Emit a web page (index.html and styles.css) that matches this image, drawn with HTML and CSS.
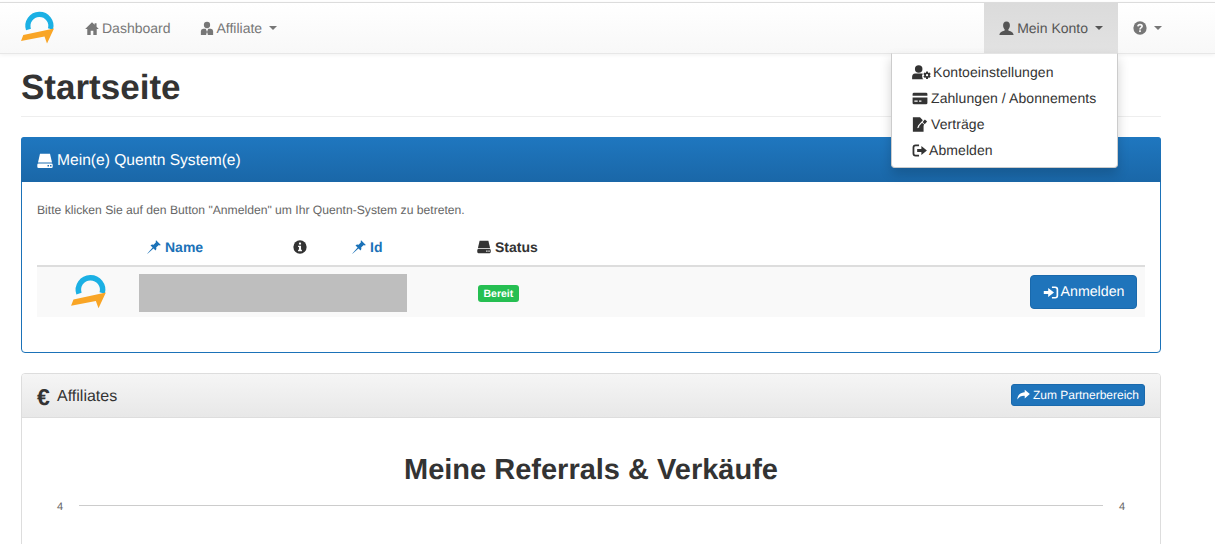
FILE: index.html
```html
<!DOCTYPE html>
<html lang="de">
<head>
<meta charset="utf-8">
<title>Startseite</title>
<link rel="stylesheet" href="styles.css">
</head>
<body>
<svg class="defs" width="0" height="0" aria-hidden="true">
  <symbol id="logo" viewBox="0 0 36 36">
    <path d="M8.5 19.5 A11.5 11.5 0 1 1 30.5 19" fill="none" stroke="#1bb0e4" stroke-width="5.2"/>
    <path d="M1 31 L3.3 25 L34 18.5 L27 33.5 L24.5 26.5 Z" fill="#f9a526"/>
  </symbol>
  <symbol id="i-home" viewBox="0 0 16 16"><path d="M8 .8 L.2 8.6 H2.6 V15.4 H6.5 V10.5 H9.5 V15.4 H13.4 V8.6 H15.8 L13.2 6 V2 H11 V3.8z"/></symbol>
  <symbol id="i-aff" viewBox="0 0 16 16"><circle cx="8" cy="4" r="3.6"/><path d="M1 15.5 V11 Q1 8.6 3.6 8.4 H6.6 L8 12 L9.4 8.4 H12.4 Q15 8.6 15 11 V15.5 H9 L8.4 12.5 H7.6 L7 15.5z"/></symbol>
  <symbol id="i-user" viewBox="0 0 16 16"><path d="M8 .6 C10.6 .6 11.8 2.5 11.6 5 C11.5 6.8 10.8 8 10 8.7 V10 C11.2 10.7 15.4 11 15.6 15 H.4 C.6 11 4.8 10.7 6 10 V8.7 C5.2 8 4.5 6.8 4.4 5 C4.2 2.5 5.4 .6 8 .6z"/></symbol>
  <symbol id="i-q" viewBox="0 0 16 16"><circle cx="8" cy="8" r="7.6"/><path d="M5.6 6.2 C5.8 3.4 10.4 3.4 10.4 6 C10.4 7.6 8 7.6 8 9.6" fill="none" stroke="#fafafa" stroke-width="1.9"/><rect x="7" y="10.6" width="2" height="2" fill="#fafafa"/></symbol>
  <symbol id="i-info" viewBox="0 0 16 16"><circle cx="8" cy="8" r="7.6"/><rect x="6.8" y="3" width="2.4" height="2.2" fill="#fff"/><path d="M5.8 6.5 H9.2 V11.2 H10.2 V12.8 H5.8 V11.2 H6.8 V8.1 H5.8z" fill="#fff"/></symbol>
  <symbol id="i-pin" viewBox="0 0 16 16"><path d="M10.4 .2 L15.8 5.6 L14.6 6.2 L13.6 5.6 L10.6 8.4 Q11.2 10.6 9.8 12 L7.4 9.6 L.6 15.6 L.4 15.4 L6.4 8.6 L4 6.2 Q5.4 4.8 7.6 5.4 L10.4 2.4 L9.8 1.4z"/></symbol>
  <symbol id="i-hdd" viewBox="0 0 16 16"><path d="M3 .8 H13 L15 9.4 H1z"/><path fill-rule="evenodd" d="M1.6 10.4 H14.4 Q15.7 10.4 15.7 11.7 V13.7 Q15.7 15 14.4 15 H1.6 Q.3 15 .3 13.7 V11.7 Q.3 10.4 1.6 10.4z M10.5 12 V13.4 H12 V12z M13 12 V13.4 H14.5 V12z"/></symbol>
  <symbol id="i-login" viewBox="0 0 16 16"><path d="M9 1.5 H12.5 Q15.7 1.5 15.7 4.7 V11.3 Q15.7 14.5 12.5 14.5 H9 V12.7 H12.3 Q13.9 12.7 13.9 11.1 V4.9 Q13.9 3.3 12.3 3.3 H9z"/><path d="M.3 6.3 H5 V3.2 L11.2 8 L5 12.8 V9.7 H.3z"/></symbol>
  <symbol id="i-logout" viewBox="0 0 16 16"><path d="M7.5 1.5 H3.8 Q.6 1.5 .6 4.7 V11.3 Q.6 14.5 3.8 14.5 H7.5 V12.6 H4 Q2.5 12.6 2.5 11.1 V4.9 Q2.5 3.4 4 3.4 H7.5z"/><path d="M5.5 6.3 H10 V3.2 L15.9 8 L10 12.8 V9.7 H5.5z"/></symbol>
  <symbol id="i-share" viewBox="0 0 16 16"><path d="M9.5 2 L15.8 7.5 L9.5 13 V9.7 C5.5 9.5 3 10.7 .4 14 C.8 9 4 5.6 9.5 5.3z"/></symbol>
  <symbol id="i-card" viewBox="0 0 16 16"><path fill-rule="evenodd" d="M1.6 1.8 H14.4 Q15.9 1.8 15.9 3.3 V5 H.1 V3.3 Q.1 1.8 1.6 1.8z M.1 6.8 H15.9 V12.7 Q15.9 14.2 14.4 14.2 H1.6 Q.1 14.2 .1 12.7z M2 10 V11.4 H5.5 V10z M7 10 V11.4 H9.5 V10z"/></symbol>
  <symbol id="i-contract" viewBox="0 0 16 16"><path d="M.4 .3 H8 L11 3.4 L6 9 L5 12 L8 11 L11.8 7 V15.7 H.4z"/><path d="M10.8 5.4 L13.2 2.6 L15.6 4.8 L13 7.6z M7.4 9.2 L10.2 6.2 L12.4 8.2 L9 11.2 L6.6 11.8z"/></symbol>
  <symbol id="i-userset" viewBox="0 0 20 16"><circle cx="7" cy="4.2" r="4"/><path d="M0 15.2 V12.5 Q0 9.2 3.2 9 H10.4 Q11 9 11.5 9.2 L10.6 11 L11 14 L12 15.2z"/><path fill-rule="evenodd" d="M15 7 L16.8 7 L17.2 8.6 L18.7 8.1 L19.8 9.6 L18.7 10.9 L19.8 12.2 L18.7 13.7 L17.2 13.2 L16.8 14.8 H15 L14.6 13.2 L13.1 13.7 L12 12.2 L13.1 10.9 L12 9.6 L13.1 8.1 L14.6 8.6z M15.9 9.7 A1.2 1.2 0 1 0 15.9 12.1 A1.2 1.2 0 1 0 15.9 9.7z"/></symbol>
</svg>

<nav class="navbar">
  <a class="brand" href="#"><svg class="logo-nav"><use href="#logo"/></svg></a>
  <ul class="nav">
    <li><a href="#"><svg class="ic"><use href="#i-home"/></svg>Dashboard</a></li>
    <li class="aff"><a href="#"><svg class="ic"><use href="#i-aff"/></svg>Affiliate<span class="caret"></span></a></li>
  </ul>
  <ul class="nav nav-right">
    <li class="open">
      <a href="#"><svg class="ic ic-wide"><use href="#i-user"/></svg>Mein Konto<span class="caret"></span></a>
      <ul class="menu">
        <li><a href="#"><svg class="ic-set"><use href="#i-userset"/></svg>Kontoeinstellungen</a></li>
        <li><a href="#"><svg class="ic-menu"><use href="#i-card"/></svg>Zahlungen / Abonnements</a></li>
        <li><a href="#"><svg class="ic-menu"><use href="#i-contract"/></svg>Verträge</a></li>
        <li><a href="#"><svg class="ic-logout"><use href="#i-logout"/></svg>Abmelden</a></li>
      </ul>
    </li>
    <li class="help"><a href="#"><svg class="ic-q"><use href="#i-q"/></svg><span class="caret"></span></a></li>
  </ul>
</nav>

<main class="container">
  <h1 class="page-title">Startseite</h1>

  <section class="panel panel-primary">
    <header class="panel-head head-blue">
      <h2 class="panel-name"><svg class="ic-panel"><use href="#i-hdd"/></svg>Mein(e) Quentn System(e)</h2>
    </header>
    <div class="panel-body">
      <p class="hint">Bitte klicken Sie auf den Button "Anmelden" um Ihr Quentn-System zu betreten.</p>
      <div class="tbl-head">
        <span></span>
        <span class="th th-link"><svg class="ic-th"><use href="#i-pin"/></svg>Name</span>
        <span class="th"><svg class="ic-info"><use href="#i-info"/></svg></span>
        <span class="th th-link"><svg class="ic-th"><use href="#i-pin"/></svg>Id</span>
        <span class="th"><svg class="ic-th"><use href="#i-hdd"/></svg>Status</span>
      </div>
      <div class="tbl-row">
        <span class="cell-logo"><svg class="logo-row"><use href="#logo"/></svg></span>
        <span class="redacted"></span>
        <span class="cell-status"><span class="badge">Bereit</span></span>
        <span class="cell-action"><a class="btn" href="#"><svg class="ic-btn"><use href="#i-login"/></svg>Anmelden</a></span>
      </div>
    </div>
  </section>

  <section class="panel panel-default">
    <header class="panel-head head-grey">
      <h2 class="panel-name name-dark"><span class="euro">€</span>Affiliates</h2>
      <a class="btn btn-sm" href="#"><svg class="ic-share"><use href="#i-share"/></svg>Zum Partnerbereich</a>
    </header>
    <div class="chart">
      <h3 class="chart-title">Meine Referrals &amp; Verkäufe</h3>
      <div class="chart-axis"><span>4</span><i></i><span>4</span></div>
    </div>
  </section>
</main>
</body>
</html>
```
FILE: styles.css
```css
* { box-sizing: border-box; }
html, body { height: 544px; overflow: hidden; }
body {
  margin: 0;
  background: #fff;
  color: #333;
  font-family: "Liberation Sans", Arial, sans-serif;
  font-size: 14px;
  line-height: 20px;
  text-rendering: geometricPrecision;
}
a { text-decoration: none; color: inherit; }
ul { list-style: none; margin: 0; padding: 0; }
.defs { position: absolute; }
svg { fill: currentColor; flex: none; }

/* navbar */
.navbar {
  display: flex;
  align-items: stretch;
  height: 52px;
  margin-top: 2px;
  border-top: 1px solid #dcdcdc;
  border-bottom: 1px solid #e7e7e7;
  background: linear-gradient(#fff, #f8f8f8);
  box-shadow: 0 1px 4px rgba(0, 0, 0, .06);
}
.brand { display: flex; align-items: center; width: 70px; padding-left: 20px; }
.logo-nav { width: 36px; height: 36px; }
.nav { display: flex; color: #777; }
.nav > li { position: relative; display: flex; }
.nav > li > a { display: flex; align-items: center; padding: 0 15px; }
.nav > .aff { margin-left: -1px; }
.nav-right { margin-left: auto; margin-right: 38px; }
.ic { width: 14px; height: 15px; margin-right: 3px; }
.ic-wide { width: 15px; }
.caret {
  width: 0; height: 0;
  margin-left: 7px;
  border-top: 4px solid currentColor;
  border-left: 4px solid transparent;
  border-right: 4px solid transparent;
}
.open > a { background: linear-gradient(#dbdbdb, #e2e2e2); color: #555; }
.help > a { padding: 0 14px; }
.ic-q { width: 14px; height: 14px; }

/* dropdown */
.menu {
  position: absolute;
  z-index: 5;
  top: 50px;
  right: 0;
  width: 227px;
  padding: 5px 0 4px;
  background: #fff;
  border: 1px solid #ccc;
  border-top-color: #e4e4e4;
  border-radius: 0 0 4px 4px;
  box-shadow: 0 6px 12px rgba(0, 0, 0, .175);
}
.menu a { display: flex; align-items: center; height: 26px; padding-left: 20px; color: #333; white-space: nowrap; letter-spacing: .08px; }
.ic-set { width: 19px; height: 15px; margin-right: 2px; }
.ic-menu { width: 16px; height: 15px; margin-right: 3px; }
.ic-logout { width: 15px; height: 15px; margin-right: 2px; }

/* page */
.container { width: 1140px; margin-left: 21px; }
.page-title {
  margin: 0 0 20px;
  height: 63px;
  padding-top: 14px;
  border-bottom: 1px solid #eee;
  font-size: 35px;
  line-height: 40px;
  font-weight: 700;
}

/* panels */
.panel { margin-bottom: 20px; background: #fff; border: 1px solid #ddd; border-radius: 4px; }
.panel-primary { border-color: #1b72b8; height: 216px; }
.panel-default { height: 300px; }
.panel-head {
  display: flex;
  align-items: center;
  justify-content: space-between;
  height: 44px;
  padding: 0 15px;
  border-radius: 3px 3px 0 0;
}
.head-blue { margin: -1px -1px 0; padding: 0 16px; height: 45px; color: #fff; background: linear-gradient(#1f77bf, #1a67a8); }
.head-grey { height: 44px; border-bottom: 1px solid #ddd; background: linear-gradient(#f5f5f5, #e8e8e8); }
.head-grey .btn-sm { margin-bottom: 2px; }
.panel-name { display: flex; align-items: center; margin: 0; padding-top: 2px; font-size: 15.6px; font-weight: 400; line-height: 20px; }
.name-dark { font-size: 16px; }
.ic-panel { width: 16px; height: 16px; margin-right: 4px; }
.euro { width: 20px; font-size: 23px; font-weight: 700; }

.panel-body { padding: 0 15px; }
.hint { margin: 0; padding-top: 19px; height: 47px; font-size: 12.15px; line-height: 18px; color: #666; }

.tbl-head {
  display: grid;
  grid-template-columns: 102px 146px 59px 125px 1fr;
  height: 38px;
  border-bottom: 2px solid #ddd;
}
.th { display: flex; align-items: center; padding-left: 8px; font-weight: 700; font-size: 14px; }
.th-link { color: #1b72b8; }
.ic-th { width: 14px; height: 14px; margin-right: 4px; }
.ic-info { width: 14px; height: 14px; }
.tbl-row {
  display: grid;
  grid-template-columns: 102px 268px 1fr auto;
  align-items: center;
  height: 50px;
  background: #f9f9f9;
}
.cell-logo { display: flex; justify-content: center; padding-left: 2px; }
.logo-row { width: 38px; height: 38px; }
.redacted { height: 38px; margin-top: 2px; background: #bebebe; }
.cell-status { padding-left: 71px; display: flex; }
.badge {
  padding: 0 5.5px;
  height: 17px;
  margin-top: 2px;
  border-radius: 3px;
  background: #26bf52;
  color: #fff;
  font-size: 10.5px;
  font-weight: 700;
  line-height: 18px;
}
.cell-action { padding-right: 8px; }
.btn {
  display: flex;
  align-items: center;
  justify-content: center;
  width: 107px;
  height: 34px;
  border: 1px solid #1a69ac;
  border-radius: 4px;
  background: #1f74bb;
  color: #fff;
  font-size: 14.2px;
}
.ic-btn { width: 16px; height: 15px; margin-right: 2px; }
.btn-sm { width: 134px; height: 22px; font-size: 12px; border-radius: 3px; }
.ic-share { width: 13px; height: 13px; margin-right: 3px; }

/* chart */
.chart { padding: 0 15px; }
.chart-title { margin: 0; padding-top: 35px; height: 74px; text-align: center; font-size: 29px; line-height: 34px; font-weight: 700; }
.chart-axis { display: flex; align-items: center; gap: 16px; padding: 0 20px; font-size: 11px; color: #666; height: 26px; }
.chart-axis span { padding-top: 4px; }
.chart-axis i { flex: 1; height: 1px; background: #ccc; }
```
